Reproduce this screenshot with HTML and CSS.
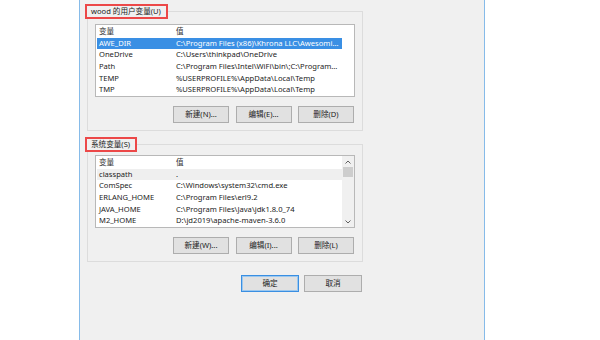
FILE: index.html
```html
<!DOCTYPE html>
<html lang="zh-CN">
<head>
<meta charset="utf-8">
<title>环境变量</title>
<link rel="stylesheet" href="styles.css">
</head>
<body>
<div class="dialog">
  <fieldset class="group">
    <legend class="group-title">wood 的用户变量(U)</legend>
    <div class="group-body">
      <div class="list">
        <div class="list-main">
          <div class="list-head"><span class="c1">变量</span><span class="c2">值</span></div>
          <div class="row sel"><span class="c1">AWE_DIR</span><span class="c2">C:\Program Files (x86)\Khrona LLC\Awesomi...</span></div>
          <div class="row"><span class="c1">OneDrive</span><span class="c2">C:\Users\thinkpad\OneDrive</span></div>
          <div class="row"><span class="c1">Path</span><span class="c2">C:\Program Files\Intel\WiFi\bin\;C:\Program...</span></div>
          <div class="row"><span class="c1">TEMP</span><span class="c2">%USERPROFILE%\AppData\Local\Temp</span></div>
          <div class="row"><span class="c1">TMP</span><span class="c2">%USERPROFILE%\AppData\Local\Temp</span></div>
        </div>
      </div>
      <div class="btns">
        <button class="btn">新建(N)...</button>
        <button class="btn">编辑(E)...</button>
        <button class="btn">删除(D)</button>
      </div>
    </div>
  </fieldset>

  <fieldset class="group group--sys">
    <legend class="group-title">系统变量(S)</legend>
    <div class="group-body">
      <div class="list list--scroll">
        <div class="list-main">
          <div class="list-head"><span class="c1">变量</span><span class="c2">值</span></div>
          <div class="row sel-muted"><span class="c1">classpath</span><span class="c2">.</span></div>
          <div class="row"><span class="c1">ComSpec</span><span class="c2">C:\Windows\system32\cmd.exe</span></div>
          <div class="row"><span class="c1">ERLANG_HOME</span><span class="c2">C:\Program Files\erl9.2</span></div>
          <div class="row"><span class="c1">JAVA_HOME</span><span class="c2">C:\Program Files\Java\jdk1.8.0_74</span></div>
          <div class="row"><span class="c1">M2_HOME</span><span class="c2">D:\jd2019\apache-maven-3.6.0</span></div>
        </div>
        <div class="scrollbar">
          <div class="sb-arrow">
            <svg width="6" height="4" viewBox="0 0 6 4"><polyline points="0.5,3.5 3,1 5.5,3.5" fill="none" stroke="#606060" stroke-width="1"/></svg>
          </div>
          <div class="sb-thumb"></div>
          <div class="sb-track"></div>
          <div class="sb-arrow">
            <svg width="6" height="4" viewBox="0 0 6 4"><polyline points="0.5,0.5 3,3 5.5,0.5" fill="none" stroke="#606060" stroke-width="1"/></svg>
          </div>
        </div>
      </div>
      <div class="btns">
        <button class="btn">新建(W)...</button>
        <button class="btn">编辑(I)...</button>
        <button class="btn">删除(L)</button>
      </div>
    </div>
  </fieldset>

  <div class="footer">
    <button class="btn btn--wide btn--default">确定</button>
    <button class="btn btn--wide">取消</button>
  </div>
</div>
</body>
</html>
```

FILE: styles.css
```css
* {
  box-sizing: border-box;
}

html,
body {
  margin: 0;
  height: 100%;
}

body {
  background: #ffffff;
  font-family: "Noto Sans", "Noto Sans CJK SC", sans-serif;
  font-size: 7.6px;
  color: #1c1c1c;
}

.dialog {
  margin-left: 79px;
  width: 406px;
  height: 340px;
  background: #f0f0f0;
  border-left: 1px solid #86bbe9;
  border-right: 1px solid #86bbe9;
  padding: 4px 0 0 7px;
}

.group {
  margin: 0;
  padding: 0;
  width: 276px;
  min-width: 0;
  border: 1px solid #dcdcdc;
}

.group + .group {
  margin-top: 6px;
}

.group-title {
  margin-left: -3px;
  padding: 0 5px 0 4px;
  border: 2px solid #ec4848;
  line-height: 11px;
  color: #222;
}

.group-body {
  padding: 5px 7px 7px;
}

.group--sys .group-body {
  padding-top: 3px;
}

.list {
  width: 260px;
  height: 73px;
  border: 1px solid #b8b8b8;
  background: #ffffff;
  overflow: hidden;
}

.list--scroll {
  display: flex;
}

.list-main {
  flex: 1;
  min-width: 0;
}

.list-head,
.row {
  display: flex;
  width: 245px;
  margin-left: 1px;
  white-space: nowrap;
}

.list-head {
  height: 12.5px;
  line-height: 12.5px;
  color: #333;
}

.row {
  height: 11.7px;
  line-height: 11.7px;
}

.c1 {
  flex: none;
  width: 78px;
  padding-left: 2px;
}

.c2 {
  flex: 1;
  min-width: 0;
  padding-left: 1px;
  overflow: hidden;
}

.row.sel {
  background: #3a8fe4;
  color: #ffffff;
}

.row.sel-muted {
  background: #efefef;
}

.scrollbar {
  flex: none;
  width: 12px;
  background: #f0f0f0;
  display: flex;
  flex-direction: column;
  align-items: center;
}

.sb-arrow {
  height: 11px;
  width: 100%;
  display: flex;
  align-items: center;
  justify-content: center;
}

.sb-thumb {
  width: 10px;
  height: 10px;
  background: #cdcdcd;
}

.sb-track {
  flex: 1;
}

.btns {
  display: flex;
  justify-content: flex-end;
  gap: 6.5px;
  margin-top: 9px;
  padding-right: 1px;
}

.btn {
  width: 56px;
  height: 17px;
  padding: 0;
  border: 1px solid #adadad;
  background: #e1e1e1;
  font: inherit;
  color: #222;
  line-height: 15px;
}

.footer {
  width: 276px;
  display: flex;
  justify-content: flex-end;
  gap: 5px;
  margin-top: 13px;
  padding-right: 1px;
}

.btn--wide {
  width: 58px;
}

.btn--default {
  border-color: #3a8fe2;
  box-shadow: inset 0 0 0 1px #9cc8ef;
}
```
